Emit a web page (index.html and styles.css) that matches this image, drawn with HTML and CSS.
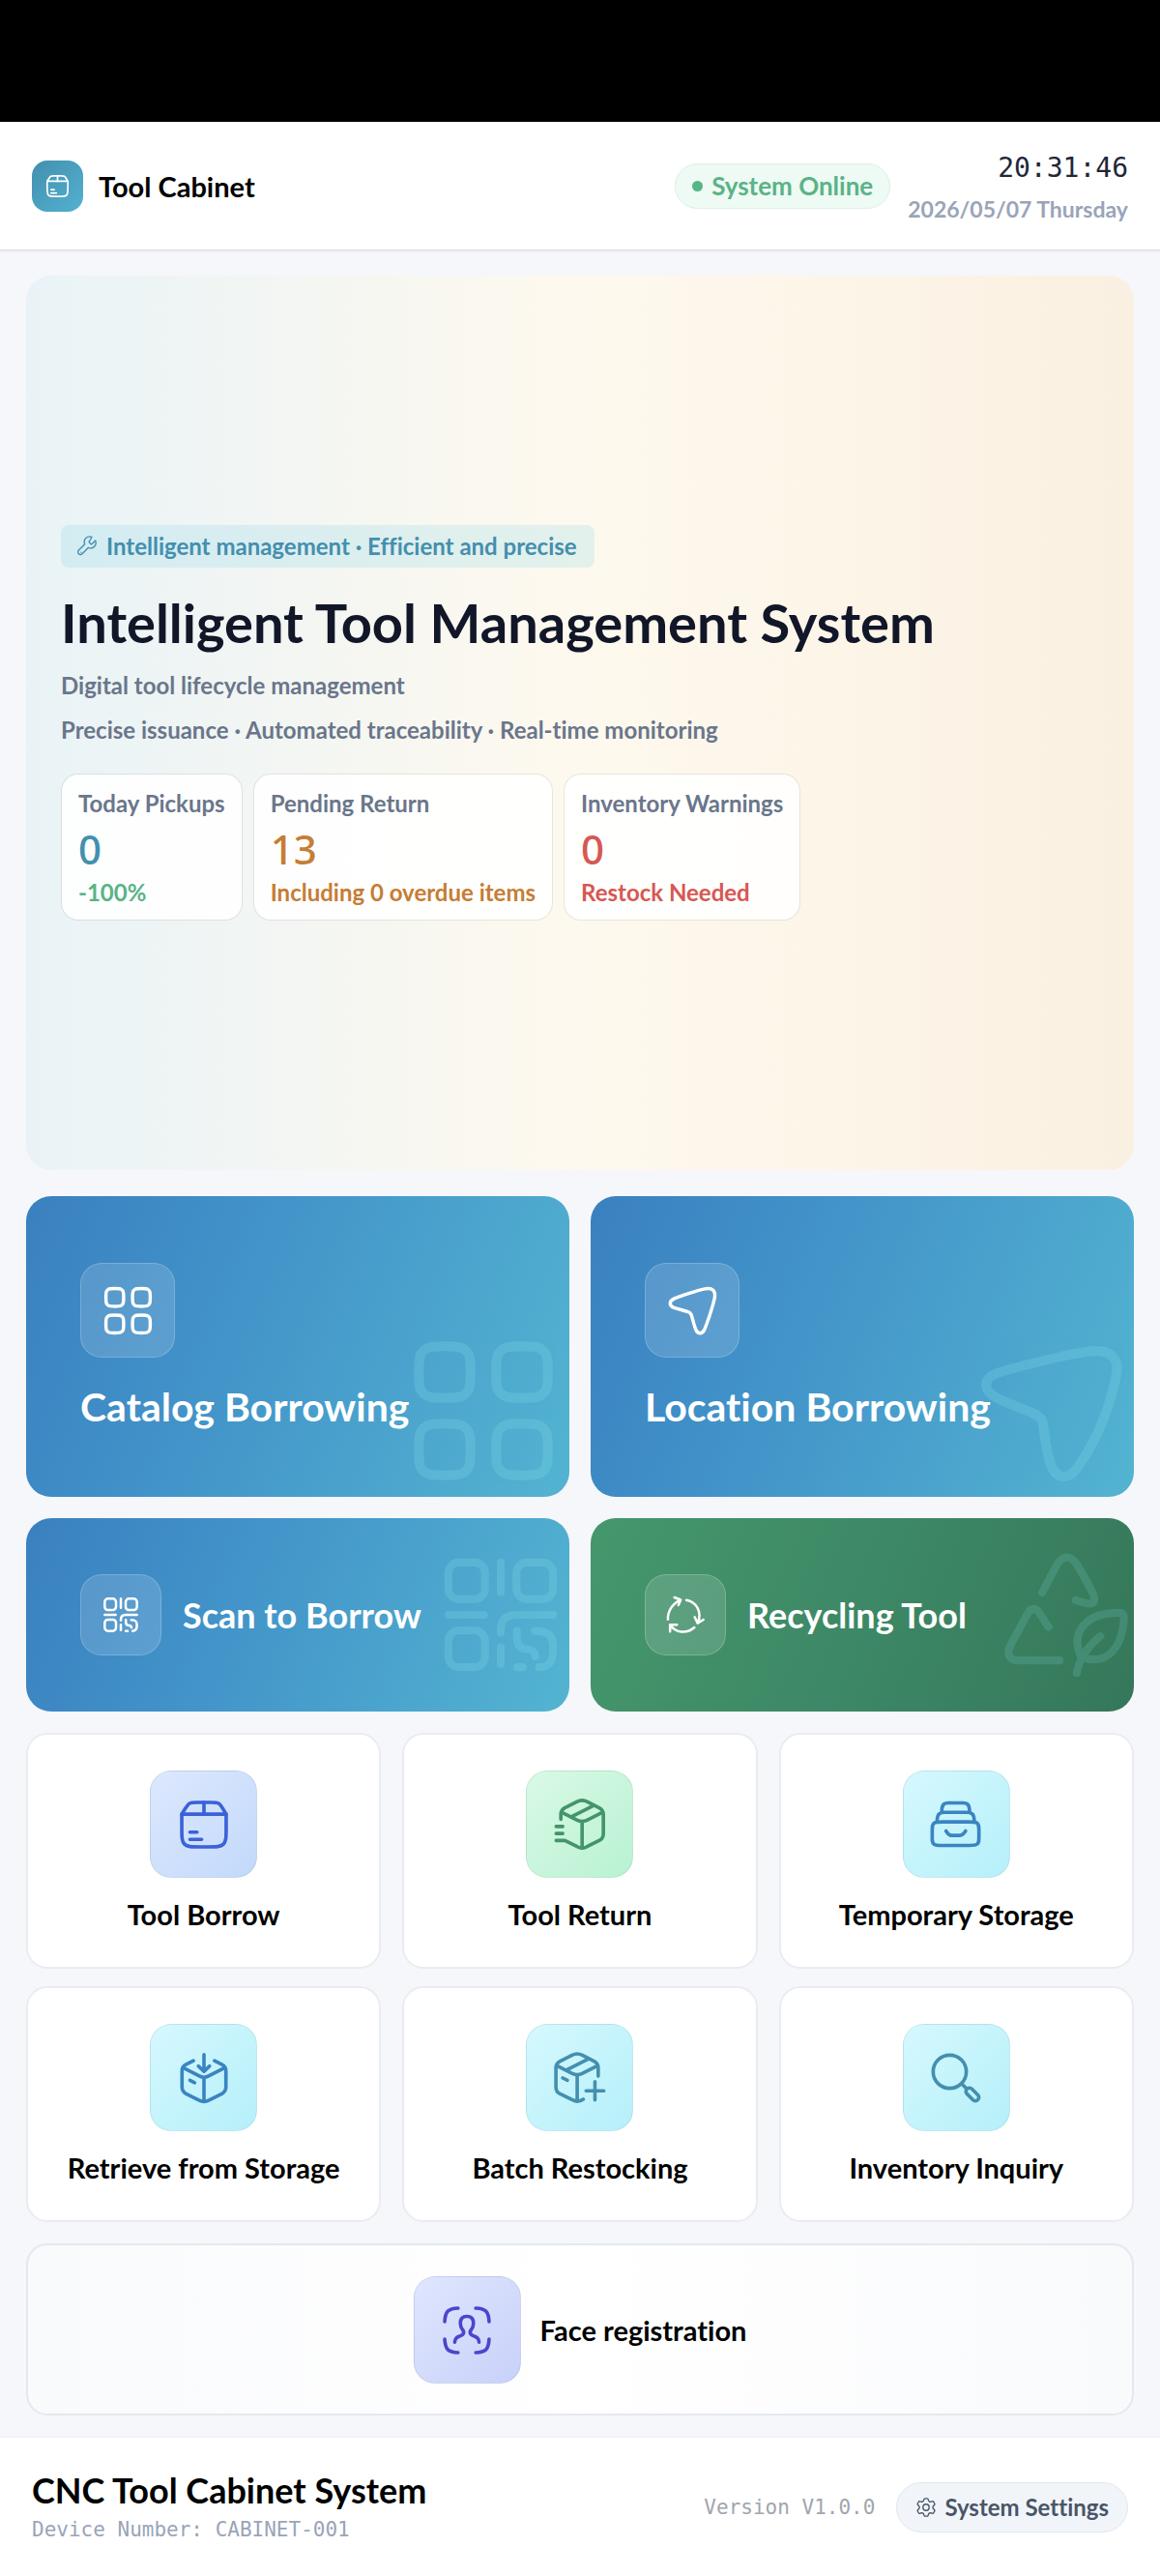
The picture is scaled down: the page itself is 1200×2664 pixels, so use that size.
FILE: index.html
```html
<!DOCTYPE html>
<html lang="en">
<head>
    <meta charset="UTF-8">
    <meta name="viewport" content="width=device-width, initial-scale=1.0">
    <title>Tool Cabinet</title>
    <link rel="stylesheet" href="styles.css">
</head>
<body>
    <!-- Shared icons -->
    <svg class="icon-defs" aria-hidden="true">
        <symbol id="icon-package" viewBox="0 0 24 24">
            <path d="M2.5 7.5V13.5C2.5 17.27 2.5 19.16 3.67 20.33C4.84 21.5 6.73 21.5 10.5 21.5H13.5C17.27 21.5 19.16 21.5 20.33 20.33C21.5 19.16 21.5 17.27 21.5 13.5V7.5"/>
            <path d="M3.87 5.31L2.5 7.5H21.5L20.25 5.41C19.39 3.99 18.97 3.28 18.28 2.89C17.59 2.5 16.76 2.5 15.1 2.5H8.95C7.33 2.5 6.52 2.5 5.84 2.88C5.16 3.25 4.73 3.94 3.87 5.31Z"/>
            <path d="M12 7.5V2.5M6 15.2H9M6 18.3H11"/>
        </symbol>
        <symbol id="icon-grid" viewBox="0 0 24 24">
            <path id="grid-cell" d="M2 6C2 4.46 2 3.69 2.35 3.12C2.54 2.81 2.81 2.54 3.12 2.35C3.69 2 4.46 2 6 2C7.54 2 8.31 2 8.88 2.35C9.19 2.54 9.46 2.81 9.65 3.12C10 3.69 10 4.46 10 6C10 7.54 10 8.31 9.65 8.88C9.46 9.19 9.19 9.46 8.88 9.65C8.31 10 7.54 10 6 10C4.46 10 3.69 10 3.12 9.65C2.81 9.46 2.54 9.19 2.35 8.88C2 8.31 2 7.54 2 6Z"/>
            <use href="#grid-cell" x="12"/>
            <use href="#grid-cell" y="12"/>
            <use href="#grid-cell" x="12" y="12"/>
        </symbol>
        <symbol id="icon-qr" viewBox="0 0 24 24">
            <rect x="2" y="2" width="7" height="7" rx="2"/>
            <rect x="15" y="2" width="7" height="7" rx="2"/>
            <rect x="2" y="15" width="7" height="7" rx="2"/>
            <path d="M12 2V7.7M2 12H8.8M22 12H15C12.9 12 12 12.9 12 15V15.4M12 18.2V21.4"/>
            <path d="M15.1 15.1V16.5C15.1 17.9 15.9 18.6 17.2 18.6C18.1 18.6 18.4 19 18.6 19.9M15.1 22H16.2"/>
            <path d="M18.5 15.1C21.2 15.1 22 15.9 22 18.5C22 20.9 21.3 22 19.3 22"/>
        </symbol>
    </svg>

    <div class="device-bar"></div>

    <header class="header">
        <div class="brand">
            <span class="brand-logo">
                <svg class="icon" aria-hidden="true"><use href="#icon-package"/></svg>
            </span>
            <span class="brand-name">Tool Cabinet</span>
        </div>
        <div class="header-right">
            <span class="status"><span class="status-dot"></span>System Online</span>
            <div class="clock">
                <div class="clock-time">20:31:46</div>
                <div class="clock-date">2026/05/07 Thursday</div>
            </div>
        </div>
    </header>

    <main class="main">
        <section class="hero">
            <div class="hero-badge">
                <svg class="icon" viewBox="0 0 24 24" aria-hidden="true">
                    <path d="M14.7 6.3a1 1 0 0 0 0 1.4l1.6 1.6a1 1 0 0 0 1.4 0l3.77-3.77a6 6 0 0 1-7.94 7.94l-6.91 6.91a2.6 2.6 0 0 1-4-4l6.91-6.91a6 6 0 0 1 7.94-7.94z"/>
                    <path d="M5.3 18.7h.01"/>
                </svg>
                <span>Intelligent management · Efficient and precise</span>
            </div>
            <h1 class="hero-title">Intelligent Tool Management System</h1>
            <p class="hero-text">Digital tool lifecycle management</p>
            <p class="hero-text">Precise issuance · Automated traceability · Real-time monitoring</p>
            <div class="stats">
                <div class="stat">
                    <div class="stat-label">Today Pickups</div>
                    <div class="stat-value teal">0</div>
                    <div class="stat-note green">-100%</div>
                </div>
                <div class="stat">
                    <div class="stat-label">Pending Return</div>
                    <div class="stat-value orange">13</div>
                    <div class="stat-note orange">Including 0 overdue items</div>
                </div>
                <div class="stat">
                    <div class="stat-label">Inventory Warnings</div>
                    <div class="stat-value red">0</div>
                    <div class="stat-note red">Restock Needed</div>
                </div>
            </div>
        </section>

        <section class="actions">
            <button class="action action-large">
                <span class="action-icon"><svg class="icon" aria-hidden="true"><use href="#icon-grid"/></svg></span>
                <span class="action-title">Catalog Borrowing</span>
                <svg class="icon watermark" aria-hidden="true"><use href="#icon-grid"/></svg>
            </button>
            <button class="action action-large">
                <span class="action-icon">
                    <svg class="icon" viewBox="0 0 24 24" aria-hidden="true">
                        <path d="M17.6 2.1C20.9 1.4 22.6 3.1 21.9 6.4C21.1 10.2 18.6 17.6 17.4 20.4C16.4 22.7 14.3 22.7 13.4 20.4C12.6 18.3 12 15.6 11.4 13.8C11.1 13 11 12.9 10.2 12.6C8.4 12 5.7 11.3 3.6 10.6C1.3 9.7 1.3 7.7 3.6 6.6C6.4 5.4 13.8 2.9 17.6 2.1Z"/>
                    </svg>
                </span>
                <span class="action-title">Location Borrowing</span>
                <svg class="icon watermark" viewBox="0 0 24 24" aria-hidden="true">
                    <path d="M14 3.6C16.2 3.1 18.3 2.7 19.8 2.75C21.9 2.8 23 4.2 22.7 6C22.3 8.5 21.6 10.6 20.9 12.6C19.8 15.6 18.1 18.7 16.6 20.8C15.2 22.8 13.2 22.7 12.4 20.2C11.7 18 11.5 16 11.3 14.4C11.2 13.3 10.8 12.9 9.7 12.4C7.7 11.5 5.6 10.8 3.9 9.9C1.9 8.8 1.9 7 4 6.2C7 5.2 10.5 4.4 14 3.6Z"/>
                </svg>
            </button>
            <button class="action action-small">
                <span class="action-icon"><svg class="icon" aria-hidden="true"><use href="#icon-qr"/></svg></span>
                <span class="action-title">Scan to Borrow</span>
                <svg class="icon watermark" aria-hidden="true"><use href="#icon-qr"/></svg>
            </button>
            <button class="action action-small action-green">
                <span class="action-icon">
                    <svg class="icon" viewBox="0 0 24 24" aria-hidden="true">
                        <path d="M1.2 14.8C.9 10 3.8 5.2 8.9 2.8M5.2 1.2L9.1 2.7L7.7 6"/>
                        <path d="M12.6 2.8C18.8 3.8 22.6 10.2 19.7 17M17.8 13.4L19.6 17.2L23.2 15"/>
                        <path d="M17.6 19.8C13 23.9 5.8 23.4 2.6 18.2M6.8 18.1H2.5V22.3"/>
                    </svg>
                </span>
                <span class="action-title">Recycling Tool</span>
                <svg class="icon watermark" viewBox="0 0 24 24" aria-hidden="true">
                    <path d="M7.6 7.75L10.3 2.6C11.5 .5 13.1 .5 14.3 2.5C15.5 4.5 16.5 6.2 17.3 8C18 9.6 17.3 10.1 16 9.75L14 9.2"/>
                    <path d="M8.8 14.3L7 11.6C6.4 10.7 5.5 10.7 4.9 11.6L1.7 17.5C.6 19.6 1.2 20.7 3.4 20.7H10.9"/>
                    <path d="M14.2 23.1C14.6 20.7 16 18.3 18.7 16.1"/>
                    <path d="M15 20C13 15.6 15.6 11.6 22.3 11.6C23 11.6 23.3 11.9 23.2 12.7C22.9 18.2 20 21.9 15 20Z"/>
                </svg>
            </button>
        </section>

        <section class="services">
            <button class="service">
                <span class="service-icon blue"><svg class="icon" aria-hidden="true"><use href="#icon-package"/></svg></span>
                <span class="service-name">Tool Borrow</span>
            </button>
            <button class="service">
                <span class="service-icon mint">
                    <svg class="icon" viewBox="0 0 24 24" aria-hidden="true">
                        <path d="M3.8 9.7V7.6C3.8 6.2 4.3 5.5 5.5 4.8L10.6 2.2C12.2 1.4 13.6 1.4 15.2 2.2L20.2 4.8C21.5 5.5 22 6.2 22 7.6V15.9C22 17.4 21.5 18.1 20.2 18.8L15 21.4C13.5 22.3 12.4 22.3 10.8 21.4L5.5 18.8H1.8"/>
                        <path d="M4.3 6.8L10.8 10.1C12.4 10.9 13.4 10.9 15 10.1L21.5 6.8M12.9 11V22M8.3 8.6L17.5 4M1.8 12.8H4.6M1.8 15.8H4.6"/>
                    </svg>
                </span>
                <span class="service-name">Tool Return</span>
            </button>
            <button class="service">
                <span class="service-icon cyan">
                    <svg class="icon" viewBox="0 0 24 24" aria-hidden="true">
                        <path d="M1.8 15.2C1.8 12.9 1.8 12 2.5 11.4C3.2 10.8 4.2 10.8 6.2 10.8H17.5C19.5 10.8 20.5 10.8 21.1 11.4C21.8 12 21.8 12.9 21.8 15.2V17C21.8 19 21.8 19.8 21.1 20.3C20.5 20.9 19.5 20.9 17.5 20.9H6.2C4.2 20.9 3.2 20.9 2.5 20.3C1.8 19.8 1.8 19 1.8 17Z"/>
                        <path d="M3.9 10.6C3.9 7.6 4.7 6.7 7.3 6.7H16.4C19 6.7 19.8 7.6 19.8 10.6"/>
                        <path d="M5.9 6.5C5.9 3.7 6.5 2.7 8.8 2.7H14.9C17.2 2.7 17.8 3.7 17.8 6.5"/>
                        <path d="M7.7 14.7C8.4 15.9 8.9 16.6 10 16.6H13.7C14.8 16.6 15.3 15.9 16.1 14.7"/>
                    </svg>
                </span>
                <span class="service-name">Temporary Storage</span>
            </button>
            <button class="service">
                <span class="service-icon cyan">
                    <svg class="icon" viewBox="0 0 24 24" aria-hidden="true">
                        <path d="M12 2V9M9.6 6.9L12 9.2L14.4 6.9"/>
                        <path d="M7.5 4.6L4.4 6.2C3 6.9 2.6 7.6 2.6 9V15.8C2.6 17.3 3.1 18 4.4 18.8L10 21.6C11.4 22.3 12.6 22.3 14 21.6L19.6 18.8C20.9 18 21.4 17.3 21.4 15.8V9C21.4 7.6 21 6.9 19.6 6.2L16.5 4.6"/>
                        <path d="M3.1 7.6L10 11.1C11.4 11.9 12.6 11.9 14 11.1L20.9 7.6M12 12V22M6 13L8 14"/>
                    </svg>
                </span>
                <span class="service-name">Retrieve from Storage</span>
            </button>
            <button class="service">
                <span class="service-icon cyan teal">
                    <svg class="icon" viewBox="0 0 24 24" aria-hidden="true">
                        <path d="M19.8 11.2V7.6C19.8 6.2 19.3 5.5 18 4.8L13 2.2C11.4 1.4 10.2 1.4 8.6 2.2L3.5 4.8C2.2 5.5 1.7 6.2 1.7 7.6V15.9C1.7 17.4 2.2 18.1 3.5 18.8L8.8 21.4C10.6 22.3 11.8 22.2 13.4 21.1"/>
                        <path d="M2.2 6.8L8.7 10.1C10.3 10.9 11.3 10.9 12.9 10.1L19.4 6.8M10.8 11V22M6.1 8.6L15.3 4M4.6 12L6.6 13M18.4 13.6V21.4M14.6 17.5H22.2"/>
                    </svg>
                </span>
                <span class="service-name">Batch Restocking</span>
            </button>
            <button class="service">
                <span class="service-icon cyan teal">
                    <svg class="icon" viewBox="0 0 24 24" aria-hidden="true">
                        <circle cx="9.3" cy="9.3" r="7.1"/>
                        <path d="M14.4 14.5L16.6 16.6"/>
                        <rect x="-3.3" y="-1.5" width="6.6" height="3" rx="1.5" transform="translate(19 19) rotate(45)"/>
                    </svg>
                </span>
                <span class="service-name">Inventory Inquiry</span>
            </button>
        </section>

        <button class="service face">
            <span class="service-icon indigo">
                <svg class="icon" viewBox="0 0 24 24" aria-hidden="true">
                    <path d="M2.5 8.2C2.6 6.1 2.9 4.8 3.8 3.8C4.8 2.9 6.1 2.6 8.2 2.5M21.5 8.2C21.4 6.1 21.1 4.8 20.2 3.8C19.2 2.9 17.9 2.6 15.8 2.5M15.8 21.5C17.9 21.4 19.2 21.1 20.2 20.2C21.1 19.2 21.4 17.9 21.5 15.8M8.2 21.5C6.1 21.4 4.8 21.1 3.8 20.2C2.9 19.2 2.6 17.9 2.5 15.8"/>
                    <path d="M6.8 17C6.9 15.6 7.5 14.9 8.9 14.5C10.5 14.1 11.1 12.9 10.2 11.8C9.4 10.9 9.2 10 9.2 8.9C9.2 7.1 10.2 6 12 6C13.8 6 14.8 7.1 14.8 8.9C14.8 10 14.6 10.9 13.8 11.8C12.9 12.9 13.5 14.1 15.1 14.5C16.5 14.9 17.1 15.6 17.2 17"/>
                </svg>
            </span>
            <span class="service-name">Face registration</span>
        </button>
    </main>

    <footer class="footer">
        <div>
            <div class="footer-title">CNC Tool Cabinet System</div>
            <div class="footer-device">Device Number: CABINET-001</div>
        </div>
        <div class="footer-right">
            <span class="footer-version">Version V1.0.0</span>
            <button class="settings-btn">
                <svg class="icon" viewBox="0 0 24 24" aria-hidden="true">
                    <path d="M21.3 7.1L20.8 6.3C20.5 5.6 20.3 5.3 19.9 5.2C19.6 5.1 19.3 5.2 18.6 5.4L17.3 5.7C16.9 5.8 16.4 5.7 16 5.5L15.6 5.3C15.3 5.1 15 4.8 14.8 4.4L14.5 3.4C14.3 2.7 14.2 2.4 13.9 2.2C13.7 2 13.3 2 12.6 2H11.5C10.8 2 10.5 2 10.2 2.2C9.9 2.4 9.8 2.7 9.6 3.4L9.3 4.4C9.1 4.8 8.8 5.1 8.5 5.3L8.2 5.5C7.7 5.7 7.3 5.8 6.8 5.7L5.6 5.4C4.9 5.2 4.5 5.1 4.2 5.2C3.9 5.3 3.7 5.6 3.3 6.3L2.8 7.1C2.5 7.7 2.3 8.1 2.3 8.4C2.4 8.7 2.6 9 3.1 9.5L4.1 10.6C4.3 11 4.5 11.5 4.5 12C4.5 12.5 4.3 13 4.1 13.4L3.1 14.5C2.6 15 2.4 15.3 2.3 15.6C2.3 16 2.5 16.3 2.8 16.9L3.3 17.7C3.7 18.4 3.9 18.7 4.2 18.8C4.5 19 4.9 18.9 5.6 18.7L6.8 18.3C7.3 18.2 7.7 18.3 8.2 18.5L8.5 18.7C8.8 18.9 9.1 19.2 9.3 19.6L9.6 20.6C9.8 21.3 9.9 21.6 10.2 21.8C10.5 22 10.8 22 11.5 22H12.6C13.3 22 13.7 22 13.9 21.8C14.2 21.6 14.3 21.3 14.5 20.6L14.8 19.6C15 19.2 15.3 18.9 15.6 18.7L16 18.5C16.4 18.3 16.9 18.2 17.3 18.3L18.6 18.7C19.3 18.9 19.6 19 19.9 18.8C20.3 18.7 20.5 18.4 20.8 17.7L21.3 16.9C21.7 16.3 21.8 16 21.8 15.6C21.8 15.3 21.5 15 21.1 14.5L20 13.4C19.8 13 19.6 12.5 19.6 12C19.6 11.5 19.8 11 20 10.6L21.1 9.5C21.5 9 21.8 8.7 21.8 8.4C21.8 8.1 21.7 7.7 21.3 7.1Z"/>
                    <circle cx="12" cy="12" r="3.5"/>
                </svg>
                System Settings
            </button>
        </div>
    </footer>
</body>
</html>
```
FILE: styles.css
```css
* {
    margin: 0;
    padding: 0;
    box-sizing: border-box;
}

body {
    min-height: 100vh;
    display: flex;
    flex-direction: column;
    background: #f5f7fb;
    color: #000;
    font-family: 'Lato', 'Open Sans', sans-serif;
    font-weight: 700;
    font-variant-ligatures: none;
}

button {
    font: inherit;
    font-variant-ligatures: none;
    color: inherit;
    border: none;
    cursor: pointer;
}

.icon-defs {
    position: absolute;
    width: 0;
    height: 0;
}

.icon {
    width: 24px;
    height: 24px;
    flex-shrink: 0;
    fill: none;
    stroke: currentColor;
    stroke-width: 1.5;
    stroke-linecap: round;
    stroke-linejoin: round;
}

.device-bar {
    height: 126px;
    background: #000;
}

/* Header */
.header {
    display: flex;
    justify-content: space-between;
    align-items: center;
    padding: 24px 33px;
    background: #fff;
    border-bottom: 1px solid #d9dce1;
    box-shadow: 0 1px 3px rgba(0, 0, 0, 0.06);
}

.brand,
.header-right {
    display: flex;
    align-items: center;
}

.brand {
    gap: 16px;
}

.brand-logo {
    display: flex;
    align-items: center;
    justify-content: center;
    width: 53px;
    height: 53px;
    border-radius: 16px;
    color: #fff;
    background: linear-gradient(135deg, #438fae, #53b1d1);
}

.brand-logo .icon {
    width: 27px;
    height: 27px;
}

.brand-name {
    font-size: 29px;
}

.header-right {
    gap: 18px;
}

.status {
    display: flex;
    align-items: center;
    gap: 9px;
    padding: 0 17px;
    line-height: 45px;
    border: 1px solid #dcf0e7;
    border-radius: 24px;
    background: #eefaf4;
    color: #5ab387;
    font-size: 26px;
}

.status-dot {
    width: 11px;
    height: 11px;
    border-radius: 50%;
    background: #55b685;
}

.clock {
    text-align: right;
}

.clock-time {
    color: #1e2838;
    font-family: 'DejaVu Sans Mono', monospace;
    font-size: 28px;
    font-weight: 400;
    line-height: 48px;
}

.clock-date {
    color: #9aa4b9;
    font-size: 23px;
    line-height: 36px;
}

/* Main */
.main {
    flex: 1;
    display: flex;
    flex-direction: column;
    gap: 22px;
    padding: 26px 27px 22px;
}

.hero {
    flex: 1;
    display: flex;
    flex-direction: column;
    align-items: flex-start;
    justify-content: center;
    padding: 36px;
    margin-bottom: 5px;
    border-radius: 26px;
    background: linear-gradient(90deg, #e9f3f7, #fef9ee 50%, #faf0e1);
}

.hero-badge {
    display: flex;
    align-items: center;
    gap: 9px;
    padding: 0 18px 0 16px;
    margin-bottom: 27px;
    line-height: 44px;
    border-radius: 8px;
    background: rgba(103, 207, 226, 0.18);
    color: #448fae;
    font-size: 24px;
}

.hero-badge .icon {
    width: 22px;
    height: 22px;
}

.hero-title {
    margin-bottom: 12px;
    color: #111628;
    font-size: 56px;
    line-height: 60px;
}

.hero-text {
    color: #6a768b;
    font-size: 24px;
    line-height: 46px;
}

.stats {
    display: flex;
    gap: 11px;
    margin-top: 22px;
}

.stat {
    padding: 13px 17px;
    border: 1px solid rgba(0, 0, 0, 0.08);
    border-radius: 18px;
    background: rgba(255, 255, 255, 0.9);
    background-clip: padding-box;
    font-size: 24px;
}

.stat-label {
    color: #6a768b;
    line-height: 34px;
}

.stat-value {
    font-family: 'Noto Sans', sans-serif;
    font-size: 42px;
    font-weight: 500;
    line-height: 60px;
}

.stat-note {
    line-height: 30px;
}

.teal {
    color: #448fae;
}

.green {
    color: #5ab387;
}

.orange {
    color: #c67d35;
}

.red {
    color: #d65853;
}

/* Borrow / recycle actions */
.actions {
    display: grid;
    grid-template-columns: 1fr 1fr;
    gap: 22px;
}

.action {
    position: relative;
    display: flex;
    padding: 0 56px;
    overflow: hidden;
    border-radius: 26px;
    background: linear-gradient(112deg, #3a80c0, #4191c8 33%, #53b4d1);
    color: #fff;
    text-align: left;
}

.action-green {
    background: linear-gradient(112deg, #45976c, #3d8866 50%, #35775a);
}

.action-large {
    flex-direction: column;
    justify-content: center;
    gap: 26px;
    min-height: 311px;
}

.action-small {
    align-items: center;
    gap: 22px;
    min-height: 200px;
}

.action-icon {
    display: flex;
    align-items: center;
    justify-content: center;
    width: 98px;
    height: 98px;
    border: 1px solid rgba(255, 255, 255, 0.2);
    border-radius: 22px;
    background: rgba(255, 255, 255, 0.14);
}

.action-icon .icon {
    width: 55px;
    height: 55px;
}

.action-small .action-icon {
    width: 84px;
    height: 84px;
}

.action-small .action-icon .icon {
    width: 40px;
    height: 40px;
}

.action-title {
    font-size: 41px;
    line-height: 49px;
}

.action-small .action-title {
    font-size: 36px;
}

.watermark {
    position: absolute;
    right: 9px;
    bottom: 9px;
    width: 160px;
    height: 160px;
    color: #8ae5ee;
    opacity: 0.22;
}

.action-small .watermark {
    right: 6px;
    bottom: 35px;
    width: 130px;
    height: 130px;
}

.action-green .watermark {
    opacity: 0.16;
}

/* Services */
.services {
    display: grid;
    grid-template-columns: repeat(3, 1fr);
    gap: 18px 22px;
}

.service {
    display: flex;
    flex-direction: column;
    align-items: center;
    gap: 20px;
    padding: 37px 16px;
    border: 2px solid #e9ecf1;
    border-radius: 22px;
    background: #fff;
}

.service-icon {
    display: flex;
    align-items: center;
    justify-content: center;
    width: 111px;
    height: 111px;
    border: 1px solid rgba(0, 0, 0, 0.06);
    border-radius: 22px;
}

.service-icon .icon {
    width: 58px;
    height: 58px;
}

.service-name {
    font-size: 29px;
    line-height: 35px;
}

.blue {
    color: #3a62d8;
    background: linear-gradient(135deg, #dde8fd, #c2d9fb);
}

.mint {
    color: #44946c;
    background: linear-gradient(135deg, #daf9e6, #b8f2d3);
}

.cyan {
    color: #3a84c2;
    background: linear-gradient(135deg, #d6f8fe, #b5f0fa);
}

.cyan.teal {
    color: #448fae;
}

.indigo {
    color: #4c45cc;
    background: linear-gradient(135deg, #e0e6fe, #c8d1f9);
}

.face {
    flex-direction: row;
    justify-content: center;
    gap: 20px;
    padding: 32px 16px 31px;
    border-color: #e4e8ee;
    background: linear-gradient(90deg, #f9fafc, #fff 50%, #f9fafc);
}

/* Footer */
.footer {
    display: flex;
    justify-content: space-between;
    align-items: center;
    min-height: 144px;
    padding: 22px 33px;
    border-top: 1px solid #eceff3;
    background: #fff;
}

.footer-title {
    font-size: 36px;
    line-height: 46px;
}

.footer-device,
.footer-version {
    font-family: 'DejaVu Sans Mono', monospace;
    font-size: 21px;
    font-weight: 400;
    line-height: 36px;
}

.footer-device {
    color: #9aa4b9;
}

.footer-version {
    color: #a0a5ae;
}

.footer-right {
    display: flex;
    align-items: center;
    gap: 22px;
}

.settings-btn {
    display: flex;
    align-items: center;
    gap: 8px;
    padding: 0 19px;
    line-height: 50px;
    border: 1px solid #e2e8ee;
    border-radius: 26px;
    background: #f1f5fa;
    color: #4a5567;
    font-size: 24px;
}

.settings-btn .icon {
    width: 22px;
    height: 22px;
}
```
